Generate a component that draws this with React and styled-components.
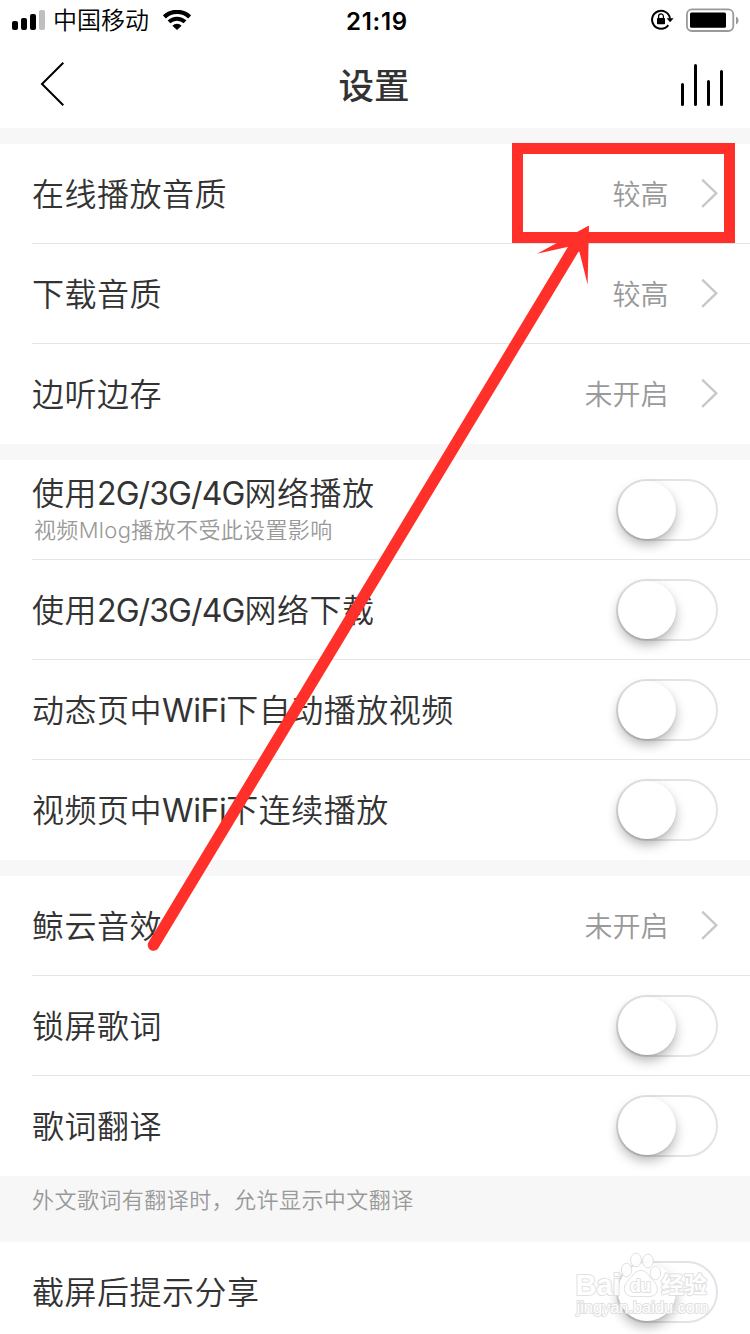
// App.jsx
import React, { useState } from 'react';
import styled, { createGlobalStyle } from 'styled-components';

const GlobalStyle = createGlobalStyle`
  * {
    box-sizing: border-box;
  }

  body {
    margin: 0;
    overflow: hidden;
    background: #fff;
    font-family: Inter, 'Noto Sans CJK SC', sans-serif;
    font-weight: 350;
    color: #333;
  }
`;

const Screen = styled.div`
  position: relative;
  width: 750px;
  height: 1334px;
  overflow: hidden;
  background: #f7f7f7;
`;

const StatusBar = styled.div`
  display: grid;
  grid-template-columns: 1fr auto 1fr;
  align-items: center;
  height: 40px;
  padding: 0 11px 0 12px;
  background: #fff;
  color: #000;
`;

const StatusSide = styled.div`
  display: flex;
  align-items: center;
  justify-content: ${(props) => (props.$end ? 'flex-end' : 'flex-start')};
  gap: ${(props) => props.$gap}px;
`;

const Carrier = styled.span`
  margin-right: 6px;
  padding-top: 2px;
  font-size: 24px;
  line-height: 38px;
`;

const Clock = styled.span`
  padding: 2px 0 0 3px;
  font-size: 24px;
  font-weight: 600;
  letter-spacing: 0.7px;
`;

const NavBar = styled.div`
  display: grid;
  grid-template-columns: 1fr auto 1fr;
  align-items: center;
  height: 88px;
  padding: 0 26px;
  background: #fff;
`;

const NavStart = styled.div`
  display: flex;
  padding-left: 14px;
`;

const Title = styled.h1`
  margin: 0;
  padding: 5px 2px 0 0;
  font-size: 35.5px;
  font-weight: 500;
  line-height: 83px;
`;

const NavEnd = styled.div`
  display: flex;
  justify-content: flex-end;
  padding-top: 3px;
`;

const Group = styled.div`
  margin-top: ${(props) => (props.$afterNote ? 0 : 16)}px;
  padding-left: 32px;
  background: #fff;
`;

const Row = styled.div`
  display: flex;
  align-items: center;
  justify-content: space-between;
  height: 100px;
  padding-right: 32px;

  &:not(:last-child) {
    box-shadow: inset 0 -1px #e4e4e4;
  }
`;

const Texts = styled.div`
  padding-top: 2px;
`;

const Label = styled.div`
  font-size: 32px;
  line-height: 38px;
  letter-spacing: 0.5px;
`;

const Latin = styled.span`
  font-weight: 380;
  letter-spacing: ${(props) => (props.$loose ? -0.4 : -0.9)}px;
`;

const Hint = styled.div`
  padding-left: 2px;
  color: #999;
  font-size: 22px;
  line-height: 34px;
  letter-spacing: 0.35px;
`;

const Value = styled.div`
  display: flex;
  align-items: center;
  gap: 32.5px;
  color: #999;
  font-size: 28px;
`;

const ValueText = styled.span`
  padding-bottom: 2px;
`;

const Note = styled.div`
  height: 66px;
  padding-left: 32px;
  color: #999;
  font-size: 22px;
  line-height: 49px;
  letter-spacing: 0.45px;
`;

const Switch = styled.button`
  display: flex;
  justify-content: ${(props) => (props.$on ? 'flex-end' : 'flex-start')};
  width: 102px;
  height: 62px;
  padding: 0;
  border: 2px solid #e3e2e8;
  border-radius: 31px;
  background: ${(props) => (props.$on ? '#dd3a32' : '#fff')};
`;

const Knob = styled.span`
  width: 58px;
  height: 58px;
  border-radius: 50%;
  background: #fff;
  box-shadow: 0 6px 12px rgba(0, 0, 0, 0.28), 0 1px 2px rgba(0, 0, 0, 0.08);
`;

const Overlay = styled.svg`
  position: absolute;
  top: 0;
  left: 0;
  pointer-events: none;
`;

const Mark = styled.text`
  font-family: 'Liberation Sans', 'Noto Sans CJK SC', sans-serif;
  font-size: ${(props) => props.$size}px;
  font-weight: ${(props) => (props.$bold ? 700 : 400)};
  stroke-width: 2px;
  stroke-linejoin: round;
  paint-order: stroke;
`;

const SignalIcon = () => (
  <svg width="33" height="20" viewBox="0 0 33 20">
    <rect x="0" y="11" width="6" height="9" rx="2" />
    <rect x="9" y="8" width="6" height="12" rx="2" />
    <rect x="18" y="4" width="6" height="16" rx="2" />
    <rect x="27" y="0" width="6" height="20" rx="2" fill="#bfbfbf" />
  </svg>
);

const WifiIcon = () => (
  <svg width="28" height="20" viewBox="0 0 28 20" fill="none" stroke="#000">
    <path d="M1.4 6.9a18.2 18.2 0 0 1 25.2 0" strokeWidth="4.2" />
    <path d="M6 11.9a11.5 11.5 0 0 1 16 0" strokeWidth="4" />
    <path d="M14 20l-4.6-4.2a6.2 6.2 0 0 1 9.2 0z" fill="#000" stroke="none" />
  </svg>
);

const RotationLockIcon = () => (
  <svg width="23" height="22" viewBox="0 0 23 22">
    <path d="M17.3 16.2a9 9 0 1 1 1.7-6.6" fill="none" stroke="#000" strokeWidth="2" />
    <path d="M15.6 9.2h7l-3.5 4z" />
    <rect x="6" y="9" width="8" height="6.2" rx="0.8" />
    <path d="M7.6 9.4V7.3a2.4 2.4 0 0 1 4.8 0v2.1" fill="none" stroke="#000" strokeWidth="1.3" />
  </svg>
);

const BatteryIcon = () => (
  <svg width="53" height="24" viewBox="0 0 53 24">
    <rect x="0.9" y="1.4" width="46.4" height="21.6" rx="5" fill="none" stroke="#999" strokeWidth="1.8" />
    <rect x="4" y="4.6" width="36" height="15.2" rx="1.5" />
    <path d="M50 8.4a4.4 4.4 0 0 1 0 8z" fill="#999" />
  </svg>
);

const BackIcon = () => (
  <svg width="26" height="44" viewBox="0 0 26 44" fill="none" stroke="#000" strokeWidth="2">
    <path d="M23.3 .8L2 22l21.3 21.2" />
  </svg>
);

const PlayingIcon = () => (
  <svg width="44" height="44" viewBox="0 0 44 44" stroke="#000" strokeWidth="3" strokeLinecap="round">
    <path d="M2.5 20.5v20M15.5 1.5v39M28.5 17.5v23M41.5 7.5v33" />
  </svg>
);

const ChevronIcon = () => (
  <svg width="17" height="30" viewBox="0 0 17 30" fill="none" stroke="#c8c8c8" strokeWidth="2.4">
    <path d="M1.2 .6L15.3 14.2L1.2 27.8" />
  </svg>
);

// latin runs are set tighter than the chinese around them
const LabelText = ({ text }) => (
  <Label>
    {text.split(/([A-Za-z0-9/]+)/).map((part, i) =>
      i % 2 ? (
        <Latin key={i} $loose={part === 'WiFi'}>
          {part}
        </Latin>
      ) : (
        part
      )
    )}
  </Label>
);

const LinkRow = ({ label, value }) => (
  <Row>
    <Texts>
      <LabelText text={label} />
    </Texts>
    <Value>
      <ValueText>{value}</ValueText>
      <ChevronIcon />
    </Value>
  </Row>
);

const SwitchRow = ({ label, hint }) => {
  const [on, setOn] = useState(false);
  return (
    <Row>
      <Texts>
        <LabelText text={label} />
        {hint && <Hint>{hint}</Hint>}
      </Texts>
      <Switch $on={on} onClick={() => setOn(!on)}>
        <Knob />
      </Switch>
    </Row>
  );
};

// red frame and arrow pointing at the quality setting
const Annotation = () => (
  <Overlay width="750" height="1334">
    <g fill="#ff3029">
      <rect x="517.5" y="148.5" width="212" height="89" fill="none" stroke="#ff3029" strokeWidth="11" />
      <path d="M153.5 945L574 248" stroke="#ff3029" strokeWidth="11.5" strokeLinecap="round" />
      <path d="M589 225.5L537 253.8L569.5 246.5L579.5 252L587.6 284.5z" />
    </g>
  </Overlay>
);

const Watermark = () => (
  <Overlay width="750" height="1334">
    <g fill="#fff" stroke="#dedede" opacity="0.9">
      <ellipse cx="626.5" cy="1270" rx="5.2" ry="6.8" />
      <ellipse cx="636" cy="1260" rx="5.4" ry="6.8" />
      <ellipse cx="648" cy="1261" rx="5.4" ry="6.8" />
      <ellipse cx="655.5" cy="1273" rx="5.2" ry="6.8" />
      <path d="M641 1270.5c-6 0-8 5-12 9c-5 5-6 10-3 14c3 4 8 3 15 3s12 1 15-3c3-4 1-9-3-13c-4-4-6-10-12-10z" />
      <Mark x="575.5" y="1294.5" $size={29} $bold textLength="45">Bai</Mark>
      <Mark x="630" y="1292" $size={18} $bold textLength="21">du</Mark>
      <Mark x="661" y="1293" $size={23} $bold>经验</Mark>
      <Mark x="576.5" y="1313" $size={16} textLength="132" lengthAdjust="spacingAndGlyphs">jingyan.baidu.com</Mark>
    </g>
  </Overlay>
);

const App = () => {
  return (
    <>
      <GlobalStyle />
      <Screen>
        <StatusBar>
          <StatusSide $gap={8}>
            <SignalIcon />
            <Carrier>中国移动</Carrier>
            <WifiIcon />
          </StatusSide>
          <Clock>21:19</Clock>
          <StatusSide $end $gap={12}>
            <RotationLockIcon />
            <BatteryIcon />
          </StatusSide>
        </StatusBar>
        <NavBar>
          <NavStart>
            <BackIcon />
          </NavStart>
          <Title>设置</Title>
          <NavEnd>
            <PlayingIcon />
          </NavEnd>
        </NavBar>

        <Group>
          <LinkRow label="在线播放音质" value="较高" />
          <LinkRow label="下载音质" value="较高" />
          <LinkRow label="边听边存" value="未开启" />
        </Group>
        <Group>
          <SwitchRow label="使用2G/3G/4G网络播放" hint="视频Mlog播放不受此设置影响" />
          <SwitchRow label="使用2G/3G/4G网络下载" />
          <SwitchRow label="动态页中WiFi下自动播放视频" />
          <SwitchRow label="视频页中WiFi下连续播放" />
        </Group>
        <Group>
          <LinkRow label="鲸云音效" value="未开启" />
          <SwitchRow label="锁屏歌词" />
          <SwitchRow label="歌词翻译" />
        </Group>
        <Note>外文歌词有翻译时，允许显示中文翻译</Note>
        <Group $afterNote>
          <SwitchRow label="截屏后提示分享" />
        </Group>

        <Annotation />
        <Watermark />
      </Screen>
    </>
  );
};

export default App;
